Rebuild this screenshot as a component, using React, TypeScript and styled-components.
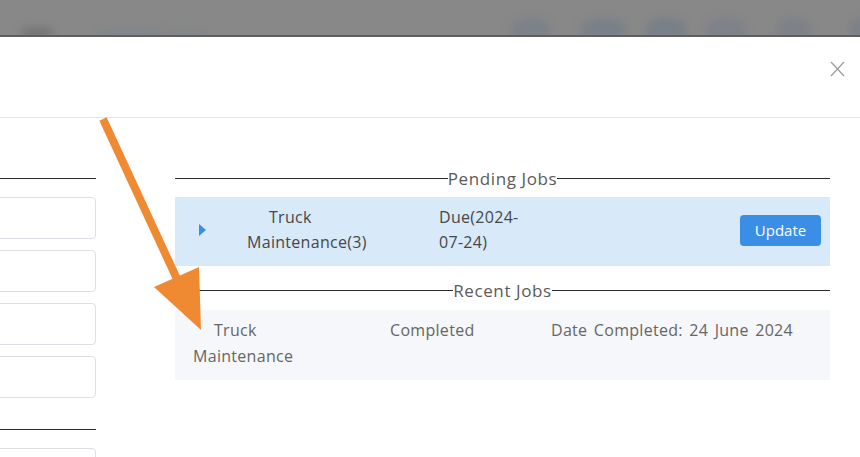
import React from "react";
import styled, { createGlobalStyle } from "styled-components";

const GlobalStyle = createGlobalStyle`
  html, body { margin: 0; padding: 0; background: #fff; }
  body {
    font-family: "Open Sans", "Liberation Sans", sans-serif;
    overflow: hidden;
  }
  * { box-sizing: border-box; }
`;

const Page = styled.div`
  position: relative;
  width: 860px;
  height: 457px;
  overflow: hidden;
  background: #fff;
`;

const Backdrop = styled.div`
  height: 37px;
  background: #888888;
  border-bottom: 2px solid #5e5e5e;
  display: flex;
  align-items: flex-end;
  overflow: hidden;
`;

const Blob = styled.div<{ $w: number; $h: number; $ml: number; $c: string; $round?: boolean }>`
  flex: none;
  width: ${(p) => p.$w}px;
  height: ${(p) => p.$h}px;
  margin-left: ${(p) => p.$ml}px;
  margin-bottom: -3px;
  background: ${(p) => p.$c};
  border-radius: ${(p) => (p.$round ? "50% 50% 0 0" : "3px")};
  filter: blur(4px);
`;

const Modal = styled.div`
  display: flex;
  flex-direction: column;
  background: #fff;
`;

const ModalHeader = styled.div`
  height: 81px;
  border-bottom: 1px solid #e4e4e4;
  display: flex;
  justify-content: flex-end;
  align-items: flex-start;
  padding: 23px 15px 0 0;
`;

const CloseButton = styled.button`
  width: 16px;
  height: 17px;
  padding: 0;
  border: none;
  background: none;
  color: #9a9a9a;
  display: flex;
  align-items: center;
  justify-content: center;
`;

const Body = styled.div`
  display: flex;
  padding-top: 48px;
`;

const LeftCol = styled.div`
  flex: none;
  width: 116px;
  margin-left: -20px;
  display: flex;
  flex-direction: column;
`;

const RightCol = styled.div`
  flex: none;
  width: 655px;
  margin-left: 79px;
  display: flex;
  flex-direction: column;
`;

const Divider = styled.div<{ $mt?: number; $mb?: number }>`
  height: 24px;
  margin-top: ${(p) => p.$mt ?? 0}px;
  margin-bottom: ${(p) => p.$mb ?? 0}px;
  display: flex;
  align-items: center;
  font-size: 17px;
  letter-spacing: 0.6px;
  color: #5a5a5a;
  white-space: nowrap;
  &::before,
  &::after {
    content: "";
    flex: 1;
    border-top: 1px solid #2a2a2a;
  }
`;

const Field = styled.input<{ $mt: number }>`
  display: block;
  flex: none;
  height: 42px;
  width: 100%;
  margin: ${(p) => p.$mt}px 0 0 0;
  border: 1px solid #dcdfe6;
  border-radius: 4px;
  background: #fff;
  outline: none;
`;

const RowText = styled.div`
  font-size: 16px;
  letter-spacing: 0.3px;
  word-spacing: 2px;
`;

const PendingRow = styled(RowText)`
  display: grid;
  grid-template-columns: 48px 192px 110px 1fr auto;
  align-items: start;
  padding: 8px 9px 11px 24px;
  background: #d8e9fa;
  color: #474747;
  line-height: 25px;
`;

const Caret = styled.span`
  align-self: center;
  width: 0;
  height: 0;
  border-left: 7px solid #3a8ee6;
  border-top: 6px solid transparent;
  border-bottom: 6px solid transparent;
`;

const CellText = styled.div<{ $w: number; $indent?: number }>`
  width: ${(p) => p.$w}px;
  text-indent: ${(p) => p.$indent ?? 0}px;
`;

const UpdateButton = styled.button`
  align-self: center;
  width: 81px;
  height: 31px;
  border: none;
  border-radius: 4px;
  background: #3a8ee6;
  color: #fff;
  font-family: inherit;
  font-size: 15px;
  letter-spacing: 0;
  padding: 0;
`;

const RecentRow = styled(RowText)`
  display: grid;
  grid-template-columns: 197px 161px 1fr;
  align-items: start;
  padding: 7px 0 11px 18px;
  background: #f5f7fa;
  color: #666;
  line-height: 26px;
`;

const ArrowLayer = styled.svg`
  position: absolute;
  left: 0;
  top: 0;
  pointer-events: none;
`;

export default function App() {
  return (
    <>
      <GlobalStyle />
      <Page>
        <Backdrop>
          <Blob $ml={22} $w={30} $h={10} $c="#727272" />
          <Blob $ml={48} $w={62} $h={8} $c="#7f858a" />
          <Blob $ml={4} $w={40} $h={8} $c="#81858a" />
          <Blob $ml={305} $w={40} $h={20} $c="#7c8188" $round />
          <Blob $ml={30} $w={45} $h={20} $c="#7a8088" $round />
          <Blob $ml={20} $w={40} $h={20} $c="#787f87" $round />
          <Blob $ml={20} $w={40} $h={20} $c="#7d8188" $round />
          <Blob $ml={30} $w={35} $h={20} $c="#7d8187" $round />
          <Blob $ml={38} $w={30} $h={20} $c="#7b8188" $round />
        </Backdrop>
        <Modal>
          <ModalHeader>
            <CloseButton aria-label="Close">
              <svg width="15" height="16" viewBox="0 0 15 16" fill="none" stroke="currentColor" strokeWidth="1.2">
                <line x1="1" y1="1" x2="14" y2="15" />
                <line x1="14" y1="1" x2="1" y2="15" />
              </svg>
            </CloseButton>
          </ModalHeader>
          <Body>
            <LeftCol>
              <Divider />
              <Field $mt={7} />
              <Field $mt={11} />
              <Field $mt={11} />
              <Field $mt={11} />
              <Divider $mt={19} />
              <Field $mt={7} />
            </LeftCol>
            <RightCol>
              <Divider $mb={7}>Pending Jobs</Divider>
              <PendingRow>
                <Caret />
                <CellText $w={150} $indent={22}>Truck Maintenance(3)</CellText>
                <CellText $w={98}>
                  Due(2024-<wbr />07-24)
                </CellText>
                <span />
                <UpdateButton>Update</UpdateButton>
              </PendingRow>
              <Divider $mt={12} $mb={8}>Recent Jobs</Divider>
              <RecentRow>
                <CellText $w={128} $indent={21}>Truck Maintenance</CellText>
                <CellText $w={150}>Completed</CellText>
                <CellText $w={300}>Date Completed: 24 June 2024</CellText>
              </RecentRow>
            </RightCol>
          </Body>
        </Modal>
        <ArrowLayer width="860" height="457" viewBox="0 0 860 457">
          <line x1="103" y1="119" x2="177" y2="279" stroke="#ef8a33" strokeWidth="8" />
          <polygon points="154,287 199,267 201,330" fill="#ef8a33" />
        </ArrowLayer>
      </Page>
    </>
  );
}
